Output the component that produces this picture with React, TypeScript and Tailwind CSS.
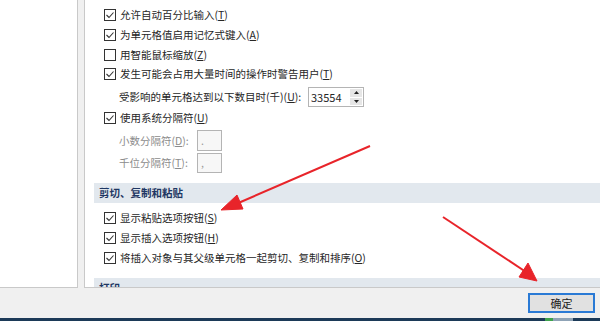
import React from "react";

const FONT = { fontFamily: '"Noto Sans CJK SC", "Noto Sans", sans-serif' };

function Box({ checked }: { checked?: boolean }) {
  return (
    <span className="flex h-[12px] w-[12px] shrink-0 items-center justify-center border border-[#333] bg-white">
      {checked && (
        <svg width="10" height="10" viewBox="0 0 10 10">
          <polyline points="1.5,5 4,7.5 8.5,2.5" fill="none" stroke="#333" strokeWidth="1.1" />
        </svg>
      )}
    </span>
  );
}

function Label({ text, hot }: { text: string; hot: string }) {
  return (
    <span>
      {text}(<span className="underline">{hot}</span>)
    </span>
  );
}

function CheckRow({ text, hot, checked, h = "h-[20px]" }: { text: string; hot: string; checked?: boolean; h?: string }) {
  return (
    <div className={`flex shrink-0 items-center gap-[4px] pl-[19px] ${h}`}>
      <Box checked={checked} />
      <Label text={text} hot={hot} />
    </div>
  );
}

function SepInput({ text, hot, ch, h }: { text: string; hot: string; ch: string; h: string }) {
  return (
    <div className={`mt-[2px] flex shrink-0 items-center pl-[34px] text-[#8c8c8c] ${h}`}>
      <span className="w-[78px]">
        <Label text={text} hot={hot} />:
      </span>
      <span className="flex h-full w-[25px] items-center border border-[#b4b4b4] bg-[#f7f7f7] pl-[3px] text-[#999]">{ch}</span>
    </div>
  );
}

function Band({ title }: { title: string }) {
  return (
    <div className="ml-[9px] flex h-[20px] shrink-0 items-center bg-[#e2e8ee] pl-[5px] font-bold text-[#1f3763]">{title}</div>
  );
}

export default function App() {
  return (
    <div style={FONT} className="relative flex h-[321px] w-[600px] flex-col overflow-hidden bg-[#f0f0f0] text-[10.5px] text-[#262626]">
      <div className="flex h-[288px] shrink-0">
        <div className="w-[78px] border-r border-b border-[#c9c9c9] bg-white" />
        <div className="w-[6px]" />
        <div className="flex flex-1 flex-col overflow-hidden border-l border-b border-[#c9c9c9] bg-white pt-[5px]">
          <CheckRow text="允许自动百分比输入" hot="T" checked />
          <CheckRow text="为单元格值启用记忆式键入" hot="A" checked />
          <CheckRow text="用智能鼠标缩放" hot="Z" h="h-[19px]" />
          <CheckRow text="发生可能会占用大量时间的操作时警告用户" hot="T" checked />
          <div className="mt-[3px] flex h-[20px] shrink-0 items-center pl-[34px]">
            <span className="w-[189px]">
              <Label text="受影响的单元格达到以下数目时(千)" hot="U" />:
            </span>
            <div className="flex h-full w-[56px] border border-[#b4b4b4] bg-white">
              <span className="flex flex-1 items-center pl-[2px] text-[11px]">33554</span>
              <div className="flex w-[14px] flex-col gap-[1px] p-[1px]">
                <span className="flex flex-1 items-center justify-center bg-[#e6e6e6]">
                  <svg width="5" height="3" viewBox="0 0 5 3"><polygon points="0,3 2.5,0 5,3" fill="#222" /></svg>
                </span>
                <span className="flex flex-1 items-center justify-center bg-[#e6e6e6]">
                  <svg width="5" height="3" viewBox="0 0 5 3"><polygon points="0,0 5,0 2.5,3" fill="#222" /></svg>
                </span>
              </div>
            </div>
          </div>
          <CheckRow text="使用系统分隔符" hot="U" checked h="h-[21px]" />
          <SepInput text="小数分隔符" hot="D" ch="." h="h-[21px]" />
          <SepInput text="千位分隔符" hot="T" ch="," h="h-[20px]" />
          <div className="mt-[10px] shrink-0">
            <Band title="剪切、复制和粘贴" />
          </div>
          <div className="mt-[5px] shrink-0">
            <CheckRow text="显示粘贴选项按钮" hot="S" checked />
            <CheckRow text="显示插入选项按钮" hot="H" checked />
            <CheckRow text="将插入对象与其父级单元格一起剪切、复制和排序" hot="O" checked />
          </div>
          <div className="mt-[10px] shrink-0">
            <Band title="打印" />
          </div>
        </div>
      </div>
      <div className="flex h-[30px] items-center justify-end pr-[5px]">
        <button className="flex h-[20px] w-[67px] items-center justify-center border-2 border-[#2a7ad5] bg-[#e1e1e1] text-[11px] text-[#222]">
          确定
        </button>
      </div>
      <div className="flex h-[3px] bg-[#1c3a58]">
        <div className="ml-[545px] w-[8px] bg-[#3fa34d]" />
        <div className="w-[20px] bg-[#8fa3b6]" />
      </div>

      <svg className="pointer-events-none absolute left-0 top-0" width="600" height="321" viewBox="0 0 600 321">
        <g fill="#e8242a" stroke="#e8242a">
          <line x1="370" y1="146" x2="236" y2="204" strokeWidth="2" />
          <polygon points="221,210 237,195 243,209" strokeWidth="1" />
          <line x1="443" y1="217" x2="526" y2="272" strokeWidth="2" />
          <polygon points="537,281 519,277 528,263" strokeWidth="1" />
        </g>
      </svg>
    </div>
  );
}
